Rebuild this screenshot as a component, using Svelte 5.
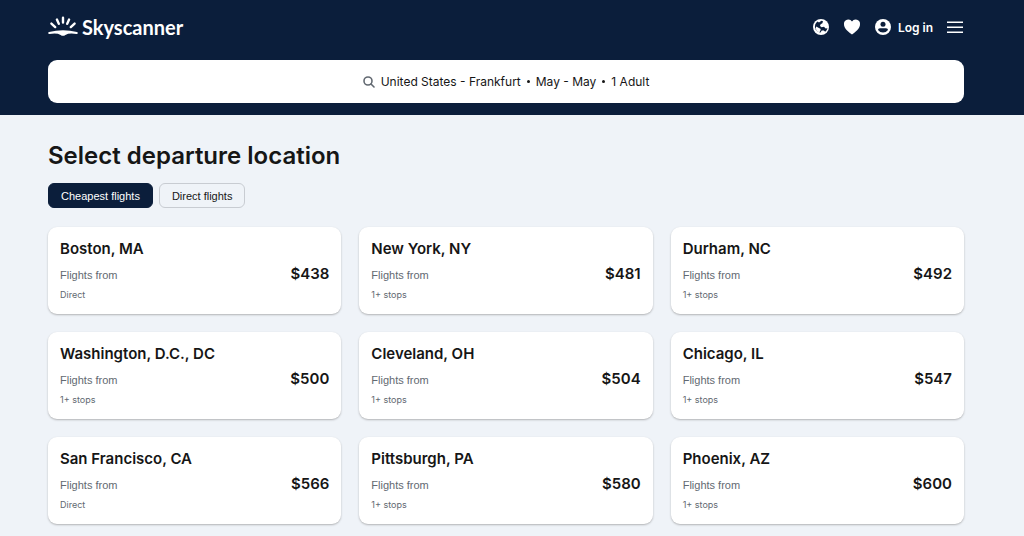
<script>
  const flights = [
    { city: 'Boston, MA', stops: 'Direct', price: '$438' },
    { city: 'New York, NY', stops: '1+ stops', price: '$481' },
    { city: 'Durham, NC', stops: '1+ stops', price: '$492' },
    { city: 'Washington, D.C., DC', stops: '1+ stops', price: '$500' },
    { city: 'Cleveland, OH', stops: '1+ stops', price: '$504' },
    { city: 'Chicago, IL', stops: '1+ stops', price: '$547' },
    { city: 'San Francisco, CA', stops: 'Direct', price: '$566' },
    { city: 'Pittsburgh, PA', stops: '1+ stops', price: '$580' },
    { city: 'Phoenix, AZ', stops: '1+ stops', price: '$600' }
  ];
  const tabs = ['Cheapest flights', 'Direct flights'];
  let active = $state(0);
</script>

<header>
  <div class="bar">
    <a class="logo" href="#home">
      <svg width="30" height="22" viewBox="0 0 30 22" aria-hidden="true">
        <path stroke="#fff" stroke-width="2.400" stroke-linecap="round" fill="none" d="M15 1.800v4.800M8.900 3.600l1.900 4.200M21.100 3.600l-1.900 4.200M3.400 7.600l3.800 3.500M26.600 7.600l-3.800 3.500" />
        <path fill="#fff" d="M1 16Q15 12.400 29 16Q30 16.300 29.800 17.300Q29.500 18.100 28.500 17.900Q21 16.600 17.400 18.900Q15 20.600 12.600 18.900Q9 16.600 1.500 17.900Q.5 18.100.2 17.300Q0 16.300 1 16z" />
      </svg>
      <span>Skyscanner</span>
    </a>
    <nav>
      <button class="icon" aria-label="Regional settings">
        <svg width="18" height="18" viewBox="0 0 18 18">
          <circle cx="9" cy="9" r="8" fill="#fff" />
          <path fill="#0b1e3b" d="M5.600 3.600L7 4.400L9.400 2.700L11 3.300L10.400 5.200L8.600 6.200L8 8L9.600 9.200L12 8.800L13.600 10.400L15.500 10.200Q14.900 12.400 13.200 13.800L11.800 12.400L9.800 12.600L8.200 14.800Q5 13.600 3.600 11.600Q2.400 9 3.200 6.400Q4 4.600 5.600 3.600z" />
          <path fill="#fff" d="M4.200 8.400L7.400 10.200L8.800 11.600L7.400 14.400Q4 13 3.600 10.600z" />
        </svg>
      </button>
      <button class="icon" aria-label="Saved">
        <svg width="18" height="18" viewBox="0 0 18 18"><path fill="#fff" d="M9 16.500C3 12 1 9.500 1 6.200A4.300 4.300 0 0 1 9 3.600a4.300 4.300 0 0 1 8 2.600C17 9.500 15 12 9 16.500z" /></svg>
      </button>
      <button class="login">
        <svg width="18" height="18" viewBox="0 0 18 18" aria-hidden="true"><circle cx="9" cy="9" r="8" fill="#fff" /><circle cx="9" cy="6.300" r="2.500" fill="#0b1e3b" /><path d="M4 12Q4 10.300 6 10.300h6Q14 10.300 14 12Q12 14.600 9 14.600T4 12z" fill="#0b1e3b" /></svg>
        <span>Log in</span>
      </button>
      <button class="icon" aria-label="Menu">
        <svg width="18" height="18" viewBox="0 0 18 18"><path stroke="#fff" stroke-width="1.500" d="M1 4.250h16M1 9.250h16M1 14.250h16" /></svg>
      </button>
    </nav>
  </div>
  <button class="search">
    <svg width="12" height="12" viewBox="0 0 12 12" aria-hidden="true"><g fill="none" stroke="#626971" stroke-width="1.600" stroke-linecap="round"><circle cx="5" cy="5" r="4" /><path d="M8 8l3 3" /></g></svg>
    <span>United States - Frankfurt</span><i></i><span>May - May</span><i></i><span>1 Adult</span>
  </button>
</header>

<main>
  <h1>Select departure location</h1>
  <div class="tabs">
    {#each tabs as tab, i}
      <button class:active={active === i} aria-pressed={active === i} onclick={() => (active = i)}>{tab}</button>
    {/each}
  </div>
  <div class="grid">
    {#each flights as flight}
      <a class="card" href="#flights">
        <h2>{flight.city}</h2>
        <div class="fare"><span>Flights from</span><strong>{flight.price}</strong></div>
        <small>{flight.stops}</small>
      </a>
    {/each}
  </div>
</main>

<style>
  :global(body) {
    margin: 0;
    background: #eff3f8;
    color: #161616;
    font-family: Inter, 'Liberation Sans', sans-serif;
  }
  button {
    font: inherit;
    color: inherit;
    border: 0;
    background: none;
    padding: 0;
    cursor: pointer;
  }
  a { color: inherit; text-decoration: none; }
  svg { display: block; flex: none; }
  header {
    background: #0b1e3b;
    color: #fff;
    padding: 12px 60px 12px 48px;
  }
  .bar {
    display: flex;
    align-items: center;
    justify-content: space-between;
    height: 30px;
    margin-bottom: 18px;
  }
  .logo {
    display: flex;
    align-items: center;
    gap: 4px;
    font-family: Lato, sans-serif;
    font-size: 20px;
    line-height: 24px;
    font-weight: 700;
  }
  nav { display: flex; align-items: center; gap: 13px; }
  .login {
    display: flex;
    align-items: center;
    gap: 6px;
    font-size: 12px;
    font-weight: 600;
  }
  .search {
    display: flex;
    align-items: center;
    justify-content: center;
    gap: 6px;
    width: 100%;
    height: 43px;
    border-radius: 9px;
    background: #fff;
    color: #161616;
    font-size: 12px;
  }
  .search i { width: 3px; height: 3px; border-radius: 50%; background: #161616; }
  main { padding: 26px 60px 10px 48px; }
  h1 { margin: 0 0 12px; font-size: 24px; line-height: 30px; font-weight: 600; }
  .tabs { display: flex; gap: 6px; margin-bottom: 19px; }
  .tabs button {
    height: 25px;
    padding: 0 12px;
    border: 1px solid #c8ccd2;
    border-radius: 6px;
    font-family: 'Liberation Sans', sans-serif;
    font-size: 11px;
  }
  .tabs .active { background: #0b1e3b; border-color: #0b1e3b; color: #fff; }
  .grid { display: grid; grid-template-columns: repeat(3, minmax(0, 1fr)); gap: 18px; }
  .card {
    display: flex;
    flex-direction: column;
    padding: 12px;
    border-radius: 9px;
    background: #fff;
    box-shadow: 0 1px 2px rgba(37, 32, 31, 0.3);
  }
  h2 { margin: 0 0 3px; font-size: 15px; line-height: 20px; font-weight: 600; }
  .fare { display: flex; align-items: center; justify-content: space-between; height: 22px; }
  .fare span { font-family: 'Liberation Sans', sans-serif; font-size: 11px; line-height: 14px; padding-top: 3px; color: #626971; }
  .fare strong { font-size: 15px; font-weight: 600; }
  small { margin-top: 4px; font-size: 9px; line-height: 14px; color: #626971; }
</style>
